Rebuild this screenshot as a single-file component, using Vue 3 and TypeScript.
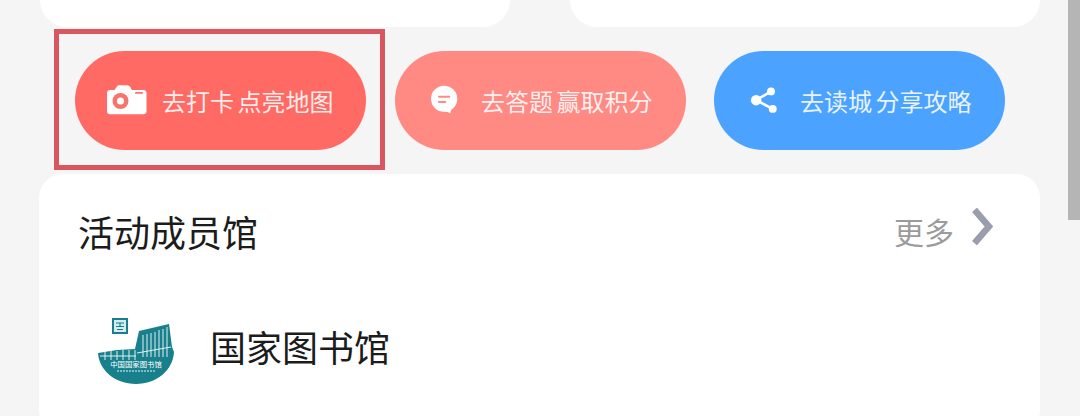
<script setup lang="ts">
type Action = {
  id: string;
  label: string;
  tone: string;
};

const actions: Action[] = [
  { id: 'camera', label: '去打卡 点亮地图', tone: 'action--red' },
  { id: 'chat', label: '去答题 赢取积分', tone: 'action--pink' },
  { id: 'share', label: '去读城 分享攻略', tone: 'action--blue' },
];
</script>

<template>
  <div class="page">
    <div class="top-cards">
      <div class="top-card"></div>
      <div class="top-card"></div>
    </div>

    <div class="actions">
      <button v-for="item in actions" :key="item.id" class="action" :class="item.tone" type="button">
        <svg class="action__icon" viewBox="0 0 40 32" aria-hidden="true">
          <g v-if="item.id === 'camera'" transform="translate(0 -2)">
            <path
              d="M3 7h4.500l2.500-3.600c.5-.8 1.200-1.100 2-1.100h8c1.600 0 3 1.100 3.800 2.600l1 2.100h11.700c1.700 0 3 1.300 3 3v18.200c0 1.700-1.300 3-3 3H3c-1.700 0-3-1.300-3-3V10c0-1.700 1.300-3 3-3z"
              fill="#fff"
            />
            <circle cx="13.500" cy="18" r="8" fill="#f9736d" />
            <circle cx="13.500" cy="18" r="3.600" fill="#fff" />
            <rect x="28" y="9" width="8" height="1.800" rx=".9" fill="#f9736d" />
          </g>
          <template v-else-if="item.id === 'chat'">
            <circle cx="15" cy="13.500" r="15" fill="#fff" />
            <path d="M13 26l9 4c.5-2.500 1-5 3-7.500z" fill="#fff" />
            <rect x="8" y="10" width="14" height="2.400" rx="1.200" fill="#ff8a84" />
            <rect x="8" y="16" width="9.500" height="2.400" rx="1.200" fill="#ff8a84" />
          </template>
          <g v-else transform="translate(1 0)">
            <path d="M6 15L23 5M6 15l19 10" stroke="#fff" stroke-width="3" fill="none" />
            <circle cx="6" cy="15" r="6" fill="#fff" />
            <circle cx="23" cy="5" r="4.500" fill="#fff" />
            <circle cx="25" cy="25" r="4.500" fill="#fff" />
          </g>
        </svg>
        <span class="action__label">{{ item.label }}</span>
      </button>
    </div>

    <section class="members">
      <header class="members__head">
        <h2 class="members__title">活动成员馆</h2>
        <div class="members__more">
          <span class="members__more-text">更多</span>
          <svg class="members__chevron" viewBox="0 0 21 37" aria-hidden="true">
            <path d="M2.500 1.800L17 18.500L2.500 35.200" fill="none" stroke="#9a9dac" stroke-width="6.500" />
          </svg>
        </div>
      </header>
      <div class="member">
        <svg class="member__logo" viewBox="0 0 80 70" aria-hidden="true">
          <path d="M1 36L20 33L38 32L42 14L72 7L75 30L77 35C76 53 60 67 39 67C18 67 2 53 1 36z" fill="#17808c" />
          <rect x="15" y="1" width="16" height="16" fill="#17808c" />
          <rect x="17" y="3" width="12" height="12" fill="#d5ebed" />
          <path d="M19 6h8M23 6v3M19 9.500h8M20 12.500h6" stroke="#17808c" stroke-width="1.200" fill="none" />
          <path
            d="M46 18v22M50 17v23M54 16v24M58 15v25M62 13v27M66 12v28M70 10v30M8 35v8M14 34v9M20 34v9M26 33v10M32 33v10M38 33v10"
            stroke="#dff1f2"
            stroke-width="1"
            fill="none"
          />
          <path d="M3 39h36M40 36l34-6" stroke="#dff1f2" stroke-width="1" fill="none" />
          <text class="member__logo-text" x="39" y="50" text-anchor="middle">中国国家图书馆</text>
          <path d="M20 54h38" stroke="#9fd0d5" stroke-width="1.300" stroke-dasharray="2 1" fill="none" />
        </svg>
        <span class="member__name">国家图书馆</span>
      </div>
    </section>

    <div class="highlight"></div>
    <div class="scrollbar"></div>
  </div>
</template>

<style scoped>
.page {
  position: relative;
  width: 1080px;
  height: 416px;
  overflow: hidden;
  background: #f5f5f5;
  font-family: "Noto Sans CJK SC", "Liberation Sans", sans-serif;
}

.top-cards {
  display: flex;
  gap: 60px;
  padding-left: 40px;
}

.top-card {
  width: 470px;
  height: 27px;
  border-radius: 0 0 30px 30px;
  background: #fff;
}

.actions {
  display: flex;
  gap: 29px;
  margin-top: 24px;
  padding-left: 75px;
}

.action {
  display: flex;
  align-items: center;
  gap: 15px;
  width: 291px;
  height: 99px;
  padding: 0 0 0 36px;
  border: 0;
  border-radius: 50px;
  color: rgba(255, 255, 255, 0.88);
  font: inherit;
}

.action:first-child {
  padding-left: 32px;
}

.action:last-child {
  margin-left: -1px;
}

.action--red {
  background: #ff6b64;
}

.action--pink {
  background: #ff8a84;
}

.action--blue {
  background: #4ca3ff;
}

.action__icon {
  flex: none;
  width: 40px;
  height: 32px;
}

.action:not(:first-child) .action__icon {
  width: 35px;
}

.action__label {
  font-size: 24px;
  line-height: 32px;
  white-space: nowrap;
  word-spacing: -2px;
}

.members {
  margin: 24px 40px 0 39px;
  height: 260px;
  border-radius: 24px;
  background: #fff;
}

.members__head {
  display: flex;
  align-items: center;
  justify-content: space-between;
  padding: 33px 47px 0 39px;
}

.members__title {
  margin: 0;
  color: #1c1c1c;
  font-size: 36px;
  font-weight: 400;
  line-height: 48px;
}

.members__more {
  display: flex;
  align-items: center;
  gap: 18px;
  color: #9b9b9b;
  font-size: 30px;
}

.members__more-text {
  padding-top: 1px;
  padding-bottom: 1px;
}

.members__chevron {
  width: 21px;
  height: 37px;
  margin-bottom: 10px;
}

.member {
  display: flex;
  align-items: center;
  gap: 33px;
  margin-top: 62px;
  padding-left: 58px;
}

.member__logo {
  flex: none;
  width: 80px;
  height: 70px;
}

.member__logo-text {
  fill: #ffffff;
  font-size: 7.400px;
}

.member__name {
  margin-bottom: 12px;
  color: #1c1c1c;
  font-size: 36px;
  line-height: 48px;
}

.highlight {
  position: absolute;
  left: 54px;
  top: 29px;
  width: 331px;
  height: 141px;
  box-sizing: border-box;
  border: 5px solid #d9565f;
}

.scrollbar {
  position: absolute;
  right: 0;
  top: 0;
  width: 12px;
  height: 220px;
  background: #b5b5b5;
}
</style>
